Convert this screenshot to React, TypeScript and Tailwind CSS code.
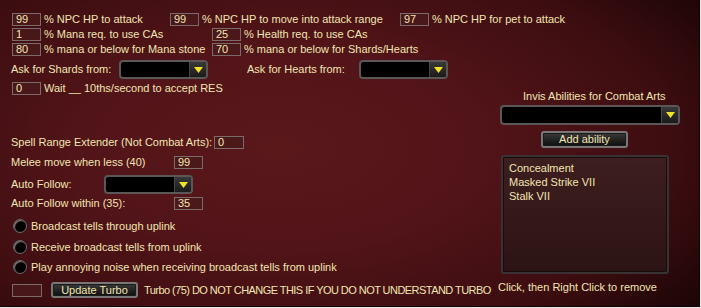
import React from 'react'

const font = { fontFamily: '"Liberation Sans", Arial, sans-serif' }

function Field({ value = '', w = 'w-[29px]' }: { value?: string; w?: string }) {
  return (
    <div
      className={`${w} h-[13px] shrink-0 border border-[#7d6a68] bg-[#4a1a1c]/80 pl-[3px] text-[11px] leading-[11px] text-[#f1e5b2]`}
    >
      {value}
    </div>
  )
}

function Dropdown({ w = 'w-[89px]', h = 'h-[19px]' }: { w?: string; h?: string }) {
  return (
    <div
      className={`${w} ${h} shrink-0 flex rounded-[4px] border-2 border-[#5b5757] bg-black overflow-hidden`}
    >
      <div className="flex-1" />
      <div className="w-[17px] flex items-center justify-center border-l border-[#4a4646] bg-gradient-to-b from-[#3a3838] to-[#1c1b1b]">
        <svg width="9" height="6" viewBox="0 0 9 6">
          <polygon points="0,0 9,0 4.5,6" fill="#f0e32a" />
        </svg>
      </div>
    </div>
  )
}

function Button({ label, w }: { label: string; w: string }) {
  return (
    <div
      className={`${w} flex items-center justify-center rounded-[3px] border-2 border-[#7a7676] bg-gradient-to-b from-[#3c3b3b] to-[#0f0f0f] text-[11px] text-[#f1e5b2] shadow-[inset_0_0_0_1px_#1a1a1a]`}
    >
      {label}
    </div>
  )
}

function Radio({ label }: { label: string }) {
  return (
    <div className="flex items-center h-[14px]">
      <div className="ml-[1px] w-[14px] h-[14px] rounded-full bg-black border border-[#6e6a6a] shadow-[inset_1px_1px_1px_#8a8585]" />
      <span className="ml-[4px] whitespace-nowrap">{label}</span>
    </div>
  )
}

export default function App() {
  return (
    <div
      style={font}
      className="w-[701px] h-[308px] overflow-hidden border-r border-b border-[#e6e6e6] text-[11px] leading-[13px] text-[#f1e5b2] bg-[radial-gradient(ellipse_75%_85%_at_40%_48%,#5a181b_0%,#511418_40%,#3c0d10_75%,#1c0506_100%)]"
    >
      <div className="h-full border-r border-b border-[#140404] pl-[12px] pt-[13px]">
        {/* Percent rows */}
        <div className="flex items-center h-[13px]">
          <div className="w-[158px] flex items-center">
            <Field value="99" />
            <span className="ml-[3px] whitespace-nowrap">% NPC HP to attack</span>
          </div>
          <div className="w-[230px] flex items-center">
            <Field value="99" />
            <span className="ml-[3px] whitespace-nowrap">% NPC HP to move into attack range</span>
          </div>
          <div className="flex items-center">
            <Field value="97" />
            <span className="ml-[3px] whitespace-nowrap">% NPC HP for pet to attack</span>
          </div>
        </div>
        <div className="flex items-center h-[13px] mt-[2px]">
          <div className="w-[200px] flex items-center">
            <Field value="1" />
            <span className="ml-[3px] whitespace-nowrap">% Mana req. to use CAs</span>
          </div>
          <div className="flex items-center">
            <Field value="25" />
            <span className="ml-[3px] whitespace-nowrap">% Health req. to use CAs</span>
          </div>
        </div>
        <div className="flex items-center h-[13px] mt-[2px]">
          <div className="w-[200px] flex items-center">
            <Field value="80" />
            <span className="ml-[3px] whitespace-nowrap">% mana or below for Mana stone</span>
          </div>
          <div className="flex items-center">
            <Field value="70" />
            <span className="ml-[3px] whitespace-nowrap">% mana or below for Shards/Hearts</span>
          </div>
        </div>

        {/* Shards / Hearts */}
        <div className="flex items-center mt-[4px]">
          <span className="w-[108px] -ml-[1px] pl-0 whitespace-nowrap">Ask for Shards from:</span>
          <Dropdown />
          <span className="ml-[39px] w-[112px] whitespace-nowrap">Ask for Hearts from:</span>
          <Dropdown />
        </div>

        <div className="flex">
          {/* Left column */}
          <div className="w-[486px] flex flex-col">
            <div className="flex items-center h-[13px] mt-[3px]">
              <Field value="0" />
              <span className="ml-[3px] whitespace-nowrap">Wait __ 10ths/second to accept RES</span>
            </div>

            <div className="flex items-center h-[14px] mt-[40px]">
              <span className="w-[203px] -ml-[1px] whitespace-nowrap">Spell Range Extender (Not Combat Arts):</span>
              <Field value="0" w="w-[30px]" />
            </div>
            <div className="flex items-center h-[13px] mt-[7px]">
              <span className="w-[163px] -ml-[1px] whitespace-nowrap">Melee move when less (40)</span>
              <Field value="99" />
            </div>
            <div className="flex items-center mt-[6px]">
              <span className="w-[93px] -ml-[1px] whitespace-nowrap">Auto Follow:</span>
              <Dropdown />
            </div>
            <div className="flex items-center h-[13px] mt-[3px]">
              <span className="w-[163px] -ml-[1px] whitespace-nowrap">Auto Follow within (35):</span>
              <Field value="35" />
            </div>

            <div className="mt-[9px]">
              <Radio label="Broadcast tells through uplink" />
            </div>
            <div className="mt-[7px]">
              <Radio label="Receive broadcast tells from uplink" />
            </div>
            <div className="mt-[6px]">
              <Radio label="Play annoying noise when receiving broadcast tells from uplink" />
            </div>

            <div className="flex items-center h-[16px] mt-[8px]">
              <Field w="w-[30px]" />
              <div className="ml-[9px] h-[16px] flex">
                <Button label="Update Turbo" w="w-[87px]" />
              </div>
              <span className="ml-[6px] whitespace-nowrap tracking-[-0.55px]">
                Turbo (75) DO NOT CHANGE THIS IF YOU DO NOT UNDERSTAND TURBO
              </span>
            </div>
          </div>

          {/* Right column */}
          <div className="flex flex-col">
            <span className="mt-[11px] ml-[25px] whitespace-nowrap">Invis Abilities for Combat Arts</span>
            <div className="mt-[2px] ml-[2px]">
              <Dropdown w="w-[180px]" h="h-[20px]" />
            </div>
            <div className="mt-[6px] ml-[43px] h-[17px] flex">
              <Button label="Add ability" w="w-[87px]" />
            </div>
            <div className="mt-[7px] ml-[3px] w-[168px] h-[119px] rounded-[3px] border-2 border-[#3a3232] bg-gradient-to-b from-[#3e1e1e] to-[#2c1414] shadow-[inset_0_0_0_1px_#1a0c0c] pl-[6px] pt-[4px] leading-[14px]">
              <div>Concealment</div>
              <div>Masked Strike VII</div>
              <div>Stalk VII</div>
            </div>
            <span className="mt-[7px] whitespace-nowrap">Click, then Right Click to remove</span>
          </div>
        </div>
      </div>
    </div>
  )
}
